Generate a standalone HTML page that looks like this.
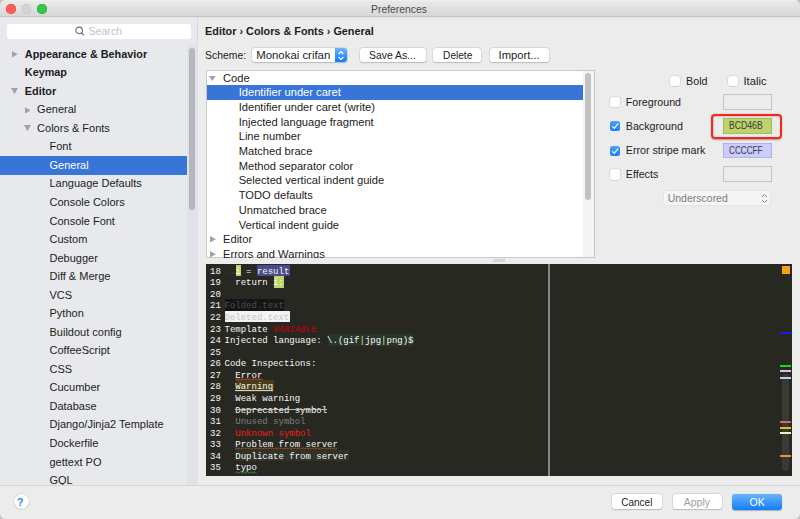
<!DOCTYPE html>
<html><head><meta charset="utf-8"><title>Preferences</title>
<style>
*{margin:0;padding:0;box-sizing:border-box}
html,body{width:800px;height:519px;overflow:hidden;background:#ececec;font-family:'Liberation Sans', sans-serif}
.t{position:absolute;white-space:pre;line-height:20px}
.r{position:absolute;display:block}
</style></head><body>
<div class="r" style="left:0.00px;top:0.00px;width:800.00px;height:17.00px;background:linear-gradient(#f2f2f2 0px,#e9e9e9 1.5px,#d7d7d7 16px);border-bottom:1px solid #c4c4c4"></div>
<div class="r" style="left:0.00px;top:17.00px;width:800.00px;height:1.00px;background:#e2e2e2"></div>
<div class="t" style="left:371.00px;top:0px;font-size:10.4px;font-weight:normal;color:#4a4a4a;font-family:'Liberation Sans';">Preferences</div>
<div class="r" style="left:6.25px;top:3.90px;width:9.70px;height:9.70px;background:#fc605c;border-radius:50%;box-shadow:inset 0 0 0 0.5px #e0443e"></div>
<div class="r" style="left:21.55px;top:3.90px;width:9.70px;height:9.70px;background:#d3d3d3;border-radius:50%;box-shadow:inset 0 0 0 0.5px #c2c2c2"></div>
<div class="r" style="left:37.15px;top:3.90px;width:9.70px;height:9.70px;background:#34c84a;border-radius:50%;box-shadow:inset 0 0 0 0.5px #2ba23b"></div>
<div class="r" style="left:0.00px;top:17.00px;width:198.00px;height:468.00px;background:#e7e9ed;border-right:1px solid #d8d8d8"></div>
<div class="r" style="left:7.00px;top:23.80px;width:183.50px;height:15.20px;background:#fff;border-radius:3px"></div>
<svg class="r" style="left:74px;top:25px" width="12" height="12"><circle cx="5.1" cy="5.4" r="3.3" fill="none" stroke="#6a6a6a" stroke-width="1.05"/><line x1="7.5" y1="7.9" x2="9.8" y2="10.4" stroke="#6a6a6a" stroke-width="1.2"/></svg>
<div class="t" style="left:88.50px;top:21px;font-size:10.6px;font-weight:normal;color:#c2c2c2;font-family:'Liberation Sans';">Search</div>
<div class="r" style="left:186.50px;top:45.00px;width:11.00px;height:440.00px;background:#dfe2e6"></div>
<div class="r" style="left:188.50px;top:47.50px;width:6.00px;height:162.50px;background:#b5b7ba;border-radius:3px"></div>
<svg class="r" style="left:12.200000000000001px;top:51.05px" width="5.6" height="6.6"><polygon points="0,0 5.6,3.3 0,6.6" fill="#a3a3a3"/></svg>
<div class="t" style="left:24.80px;top:44px;font-size:10.85px;font-weight:bold;color:#1c1c1c;font-family:'Liberation Sans';">Appearance &amp; Behavior</div>
<div class="t" style="left:24.80px;top:62px;font-size:10.85px;font-weight:bold;color:#1c1c1c;font-family:'Liberation Sans';">Keymap</div>
<svg class="r" style="left:11.3px;top:87.92999999999999px" width="7" height="6.2"><polygon points="0,0 7,0 3.5,6.2" fill="#a3a3a3"/></svg>
<div class="t" style="left:24.80px;top:81px;font-size:10.85px;font-weight:bold;color:#1c1c1c;font-family:'Liberation Sans';">Editor</div>
<svg class="r" style="left:24.5px;top:106.67px" width="5.6" height="6.6"><polygon points="0,0 5.6,3.3 0,6.6" fill="#a3a3a3"/></svg>
<div class="t" style="left:37.10px;top:99px;font-size:11px;font-weight:normal;color:#1c1c1c;font-family:'Liberation Sans';">General</div>
<svg class="r" style="left:23.6px;top:125.01px" width="7" height="6.2"><polygon points="0,0 7,0 3.5,6.2" fill="#a3a3a3"/></svg>
<div class="t" style="left:37.10px;top:118px;font-size:11px;font-weight:normal;color:#1c1c1c;font-family:'Liberation Sans';">Colors &amp; Fonts</div>
<div class="t" style="left:49.50px;top:136px;font-size:11px;font-weight:normal;color:#1c1c1c;font-family:'Liberation Sans';">Font</div>
<div class="r" style="left:0.00px;top:156.00px;width:186.50px;height:18.50px;background:#3875d7"></div>
<div class="t" style="left:49.50px;top:155px;font-size:11px;font-weight:normal;color:#fff;font-family:'Liberation Sans';">General</div>
<div class="t" style="left:49.50px;top:173px;font-size:11px;font-weight:normal;color:#1c1c1c;font-family:'Liberation Sans';">Language Defaults</div>
<div class="t" style="left:49.50px;top:192px;font-size:11px;font-weight:normal;color:#1c1c1c;font-family:'Liberation Sans';">Console Colors</div>
<div class="t" style="left:49.50px;top:211px;font-size:11px;font-weight:normal;color:#1c1c1c;font-family:'Liberation Sans';">Console Font</div>
<div class="t" style="left:49.50px;top:229px;font-size:11px;font-weight:normal;color:#1c1c1c;font-family:'Liberation Sans';">Custom</div>
<div class="t" style="left:49.50px;top:248px;font-size:11px;font-weight:normal;color:#1c1c1c;font-family:'Liberation Sans';">Debugger</div>
<div class="t" style="left:49.50px;top:266px;font-size:11px;font-weight:normal;color:#1c1c1c;font-family:'Liberation Sans';">Diff &amp; Merge</div>
<div class="t" style="left:49.50px;top:285px;font-size:11px;font-weight:normal;color:#1c1c1c;font-family:'Liberation Sans';">VCS</div>
<div class="t" style="left:49.50px;top:303px;font-size:11px;font-weight:normal;color:#1c1c1c;font-family:'Liberation Sans';">Python</div>
<div class="t" style="left:49.50px;top:322px;font-size:11px;font-weight:normal;color:#1c1c1c;font-family:'Liberation Sans';">Buildout config</div>
<div class="t" style="left:49.50px;top:340px;font-size:11px;font-weight:normal;color:#1c1c1c;font-family:'Liberation Sans';">CoffeeScript</div>
<div class="t" style="left:49.50px;top:359px;font-size:11px;font-weight:normal;color:#1c1c1c;font-family:'Liberation Sans';">CSS</div>
<div class="t" style="left:49.50px;top:377px;font-size:11px;font-weight:normal;color:#1c1c1c;font-family:'Liberation Sans';">Cucumber</div>
<div class="t" style="left:49.50px;top:396px;font-size:11px;font-weight:normal;color:#1c1c1c;font-family:'Liberation Sans';">Database</div>
<div class="t" style="left:49.50px;top:414px;font-size:11px;font-weight:normal;color:#1c1c1c;font-family:'Liberation Sans';">Django/Jinja2 Template</div>
<div class="t" style="left:49.50px;top:433px;font-size:11px;font-weight:normal;color:#1c1c1c;font-family:'Liberation Sans';">Dockerfile</div>
<div class="t" style="left:49.50px;top:452px;font-size:11px;font-weight:normal;color:#1c1c1c;font-family:'Liberation Sans';">gettext PO</div>
<div class="t" style="left:49.50px;top:470px;font-size:11px;font-weight:normal;color:#1c1c1c;font-family:'Liberation Sans';">GQL</div>
<div class="t" style="left:205.10px;top:21px;font-size:10.85px;font-weight:bold;color:#1c1c1c;font-family:'Liberation Sans';">Editor › Colors &amp; Fonts › General</div>
<div class="t" style="left:205.10px;top:46px;font-size:10.4px;font-weight:normal;color:#1c1c1c;font-family:'Liberation Sans';">Scheme:</div>
<div class="r" style="left:252.20px;top:47.50px;width:94.50px;height:14.80px;background:#fff;border-radius:3px;box-shadow:0 0 0 0.5px #c8c8c8,0 0.5px 1px rgba(0,0,0,.25)"></div>
<div class="r" style="left:334.60px;top:47.50px;width:12.10px;height:14.80px;background:linear-gradient(#6cb3fa,#0d7ef9);border-radius:0 3px 3px 0"></div>
<svg class="r" style="left:336.6px;top:49.5px" width="8" height="11"><polyline points="1.6,4 4,1.6 6.4,4" fill="none" stroke="#fff" stroke-width="1.1"/><polyline points="1.6,7 4,9.4 6.4,7" fill="none" stroke="#fff" stroke-width="1.1"/></svg>
<div class="t" style="left:256.20px;top:45px;font-size:11.4px;font-weight:normal;color:#1c1c1c;font-family:'Liberation Sans';">Monokai crifan</div>
<div class="r" style="left:359.60px;top:48.10px;width:66.00px;height:14.40px;background:#fff;border-radius:3px;box-shadow:0 0 0 0.5px #c8c8c8,0 0.5px 1px rgba(0,0,0,.25)"></div>
<div class="t" style="left:369.00px;top:46px;font-size:10.4px;font-weight:normal;color:#1c1c1c;font-family:'Liberation Sans';">Save As...</div>
<div class="r" style="left:433.40px;top:48.10px;width:48.00px;height:14.40px;background:#fff;border-radius:3px;box-shadow:0 0 0 0.5px #c8c8c8,0 0.5px 1px rgba(0,0,0,.25)"></div>
<div class="t" style="left:443.10px;top:46px;font-size:10.1px;font-weight:normal;color:#1c1c1c;font-family:'Liberation Sans';">Delete</div>
<div class="r" style="left:489.50px;top:48.10px;width:59.10px;height:14.40px;background:#fff;border-radius:3px;box-shadow:0 0 0 0.5px #c8c8c8,0 0.5px 1px rgba(0,0,0,.25)"></div>
<div class="t" style="left:498.60px;top:45px;font-size:11.2px;font-weight:normal;color:#1c1c1c;font-family:'Liberation Sans';">Import...</div>
<div class="r" style="left:205.60px;top:70.30px;width:389.00px;height:187.50px;background:#fff;border:1px solid #c9c9c9"></div>
<div class="r" style="left:583.00px;top:71.30px;width:11.00px;height:185.50px;background:#f4f4f4"></div>
<div class="r" style="left:585.10px;top:73.00px;width:6.00px;height:127.00px;background:#c2c2c2;border-radius:3px"></div>
<div class="r" style="left:206px;top:71px;width:377px;height:186.5px;overflow:hidden">
<svg class="r" style="left:3.0999999999999996px;top:4.600000000000003px" width="6.6" height="5.2"><polygon points="0,0 6.6,0 3.3,5.2" fill="#a3a3a3"/></svg>
<div class="t" style="left:17.00px;top:-3px;font-size:11.15px;font-weight:normal;color:#1c1c1c;font-family:'Liberation Sans';">Code</div>
<div class="r" style="left:0.60px;top:14.30px;width:376.40px;height:14.50px;background:#3875d7"></div>
<div class="t" style="left:32.70px;top:11px;font-size:11.15px;font-weight:normal;color:#fff;font-family:'Liberation Sans';">Identifier under caret</div>
<div class="t" style="left:32.70px;top:26px;font-size:11.15px;font-weight:normal;color:#1c1c1c;font-family:'Liberation Sans';">Identifier under caret (write)</div>
<div class="t" style="left:32.70px;top:41px;font-size:11.15px;font-weight:normal;color:#1c1c1c;font-family:'Liberation Sans';">Injected language fragment</div>
<div class="t" style="left:32.70px;top:55px;font-size:11.15px;font-weight:normal;color:#1c1c1c;font-family:'Liberation Sans';">Line number</div>
<div class="t" style="left:32.70px;top:70px;font-size:11.15px;font-weight:normal;color:#1c1c1c;font-family:'Liberation Sans';">Matched brace</div>
<div class="t" style="left:32.70px;top:85px;font-size:11.15px;font-weight:normal;color:#1c1c1c;font-family:'Liberation Sans';">Method separator color</div>
<div class="t" style="left:32.70px;top:99px;font-size:11.15px;font-weight:normal;color:#1c1c1c;font-family:'Liberation Sans';">Selected vertical indent guide</div>
<div class="t" style="left:32.70px;top:114px;font-size:11.15px;font-weight:normal;color:#1c1c1c;font-family:'Liberation Sans';">TODO defaults</div>
<div class="t" style="left:32.70px;top:129px;font-size:11.15px;font-weight:normal;color:#1c1c1c;font-family:'Liberation Sans';">Unmatched brace</div>
<div class="t" style="left:32.70px;top:144px;font-size:11.15px;font-weight:normal;color:#1c1c1c;font-family:'Liberation Sans';">Vertical indent guide</div>
<svg class="r" style="left:3.5px;top:165.38px" width="6" height="6.5"><polygon points="0,0 6,3.25 0,6.5" fill="#a3a3a3"/></svg>
<div class="t" style="left:17.00px;top:158px;font-size:11.15px;font-weight:normal;color:#1c1c1c;font-family:'Liberation Sans';">Editor</div>
<svg class="r" style="left:3.5px;top:180.06px" width="6" height="6.5"><polygon points="0,0 6,3.25 0,6.5" fill="#a3a3a3"/></svg>
<div class="t" style="left:17.00px;top:173px;font-size:11.15px;font-weight:normal;color:#1c1c1c;font-family:'Liberation Sans';">Errors and Warnings</div>
</div>
<svg class="r" style="left:493px;top:258.5px" width="12" height="3"><g stroke="#b0b0b0" stroke-width="0.8"><line x1="0.5" y1="3" x2="2" y2="0"/><line x1="2.5" y1="3" x2="4" y2="0"/><line x1="4.5" y1="3" x2="6" y2="0"/><line x1="6.5" y1="3" x2="8" y2="0"/><line x1="8.5" y1="3" x2="10" y2="0"/><line x1="10.5" y1="3" x2="12" y2="0"/></g></svg>
<div class="r" style="left:670.30px;top:76.20px;width:10.20px;height:10.20px;background:#fff;border-radius:2.5px;box-shadow:0 0 0 0.5px #c8c8c8,0 0.5px 0.5px rgba(0,0,0,.12)"></div>
<div class="t" style="left:686.10px;top:71px;font-size:10.7px;font-weight:normal;color:#1c1c1c;font-family:'Liberation Sans';">Bold</div>
<div class="r" style="left:728.20px;top:76.20px;width:10.20px;height:10.20px;background:#fff;border-radius:2.5px;box-shadow:0 0 0 0.5px #c8c8c8,0 0.5px 0.5px rgba(0,0,0,.12)"></div>
<div class="t" style="left:743.50px;top:71px;font-size:11.2px;font-weight:normal;color:#1c1c1c;font-family:'Liberation Sans';">Italic</div>
<div class="r" style="left:610.10px;top:97.00px;width:10.20px;height:10.20px;background:#fff;border-radius:2.5px;box-shadow:0 0 0 0.5px #c8c8c8,0 0.5px 0.5px rgba(0,0,0,.12)"></div>
<div class="t" style="left:625.80px;top:92px;font-size:10.7px;font-weight:normal;color:#1c1c1c;font-family:'Liberation Sans';">Foreground</div>
<div class="r" style="left:723.00px;top:94.30px;width:48.50px;height:15.30px;background:#ececec;border:1px solid #c4c4c4"></div>
<div class="r" style="left:610.10px;top:121.20px;width:10.20px;height:10.20px;background:linear-gradient(#4ca2f9,#1a7ff4);border-radius:2.5px"></div>
<svg class="r" style="left:610.1px;top:121.2px" width="10.2" height="10.2"><polyline points="2.4,5.3 4.3,7.4 8,2.7" fill="none" stroke="#fff" stroke-width="1.2"/></svg>
<div class="t" style="left:625.80px;top:116px;font-size:10.7px;font-weight:normal;color:#1c1c1c;font-family:'Liberation Sans';">Background</div>
<div class="r" style="left:723.00px;top:118.30px;width:48.50px;height:15.60px;background:#bcd46b;box-shadow:inset 0 0 0 0.6px rgba(0,0,0,.22)"></div>
<div class="t" style="left:728.50px;top:116px;font-size:10.2px;font-weight:normal;color:#3a3a3a;font-family:'Liberation Sans';transform:scaleX(0.85);transform-origin:0 0">BCD46B</div>
<div class="r" style="left:610.10px;top:145.60px;width:10.20px;height:10.20px;background:linear-gradient(#4ca2f9,#1a7ff4);border-radius:2.5px"></div>
<svg class="r" style="left:610.1px;top:145.6px" width="10.2" height="10.2"><polyline points="2.4,5.3 4.3,7.4 8,2.7" fill="none" stroke="#fff" stroke-width="1.2"/></svg>
<div class="t" style="left:625.80px;top:140px;font-size:10.7px;font-weight:normal;color:#1c1c1c;font-family:'Liberation Sans';">Error stripe mark</div>
<div class="r" style="left:723.00px;top:142.80px;width:48.50px;height:15.60px;background:#ccccff;box-shadow:inset 0 0 0 0.6px rgba(0,0,0,.22)"></div>
<div class="t" style="left:728.50px;top:141px;font-size:10.2px;font-weight:normal;color:#3a3a3a;font-family:'Liberation Sans';transform:scaleX(0.8);transform-origin:0 0">CCCCFF</div>
<div class="r" style="left:610.10px;top:169.40px;width:10.20px;height:10.20px;background:#fff;border-radius:2.5px;box-shadow:0 0 0 0.5px #c8c8c8,0 0.5px 0.5px rgba(0,0,0,.12)"></div>
<div class="t" style="left:625.80px;top:164px;font-size:10.7px;font-weight:normal;color:#1c1c1c;font-family:'Liberation Sans';">Effects</div>
<div class="r" style="left:723.00px;top:166.30px;width:48.50px;height:15.30px;background:#ececec;border:1px solid #c4c4c4"></div>
<div class="r" style="left:711.00px;top:113.90px;width:70.60px;height:25.40px;border:2.2px solid #f5261a;border-radius:4px;box-shadow:0 0.5px 1.5px rgba(0,0,0,.35),inset 0.5px 0.5px 1.5px rgba(0,0,0,.25)"></div>
<div class="r" style="left:663.70px;top:191.20px;width:106.00px;height:13.80px;background:#f5f5f5;border-radius:3px;box-shadow:0 0 0 0.5px #dcdcdc"></div>
<div class="t" style="left:667.70px;top:188px;font-size:10.5px;font-weight:normal;color:#7c7c7c;font-family:'Liberation Sans';">Underscored</div>
<svg class="r" style="left:760.5px;top:192.5px" width="7" height="11"><polyline points="1,4 3.5,1.5 6,4" fill="none" stroke="#8a8a8a" stroke-width="1"/><polyline points="1,7 3.5,9.5 6,7" fill="none" stroke="#8a8a8a" stroke-width="1"/></svg>
<div class="r" style="left:206.00px;top:264.00px;width:585.50px;height:211.50px;background:#272822;overflow:hidden"></div>
<div class="r" style="left:548.20px;top:264.00px;width:2.00px;height:211.50px;background:#858582"></div>
<div class="t" style="left:210.10px;top:262px;font-size:9px;font-weight:normal;color:#f8f8f2;font-family:'Liberation Mono';">18</div>
<div class="t" style="left:210.10px;top:273px;font-size:9px;font-weight:normal;color:#f8f8f2;font-family:'Liberation Mono';">19</div>
<div class="t" style="left:210.10px;top:285px;font-size:9px;font-weight:normal;color:#f8f8f2;font-family:'Liberation Mono';">20</div>
<div class="t" style="left:210.10px;top:296px;font-size:9px;font-weight:normal;color:#f8f8f2;font-family:'Liberation Mono';">21</div>
<div class="t" style="left:210.10px;top:308px;font-size:9px;font-weight:normal;color:#f8f8f2;font-family:'Liberation Mono';">22</div>
<div class="t" style="left:210.10px;top:320px;font-size:9px;font-weight:normal;color:#f8f8f2;font-family:'Liberation Mono';">23</div>
<div class="t" style="left:210.10px;top:331px;font-size:9px;font-weight:normal;color:#f8f8f2;font-family:'Liberation Mono';">24</div>
<div class="t" style="left:210.10px;top:343px;font-size:9px;font-weight:normal;color:#f8f8f2;font-family:'Liberation Mono';">25</div>
<div class="t" style="left:210.10px;top:354px;font-size:9px;font-weight:normal;color:#f8f8f2;font-family:'Liberation Mono';">26</div>
<div class="t" style="left:210.10px;top:366px;font-size:9px;font-weight:normal;color:#f8f8f2;font-family:'Liberation Mono';">27</div>
<div class="t" style="left:210.10px;top:377px;font-size:9px;font-weight:normal;color:#f8f8f2;font-family:'Liberation Mono';">28</div>
<div class="t" style="left:210.10px;top:389px;font-size:9px;font-weight:normal;color:#f8f8f2;font-family:'Liberation Mono';">29</div>
<div class="t" style="left:210.10px;top:401px;font-size:9px;font-weight:normal;color:#f8f8f2;font-family:'Liberation Mono';">30</div>
<div class="t" style="left:210.10px;top:412px;font-size:9px;font-weight:normal;color:#f8f8f2;font-family:'Liberation Mono';">31</div>
<div class="t" style="left:210.10px;top:424px;font-size:9px;font-weight:normal;color:#f8f8f2;font-family:'Liberation Mono';">32</div>
<div class="t" style="left:210.10px;top:435px;font-size:9px;font-weight:normal;color:#f8f8f2;font-family:'Liberation Mono';">33</div>
<div class="t" style="left:210.10px;top:447px;font-size:9px;font-weight:normal;color:#f8f8f2;font-family:'Liberation Mono';">34</div>
<div class="t" style="left:210.10px;top:458px;font-size:9px;font-weight:normal;color:#f8f8f2;font-family:'Liberation Mono';">35</div>
<div class="r" style="left:235.80px;top:264.70px;width:5.40px;height:11.40px;background:#bcd46b"></div>
<div class="r" style="left:257.40px;top:264.70px;width:32.40px;height:11.40px;background:#4a4b8a"></div>
<div class="t" style="left:235.30px;top:262px;font-size:9px;font-weight:normal;color:#f8f8f2;font-family:'Liberation Mono';">i</div>
<div class="t" style="left:246.10px;top:262px;font-size:9px;font-weight:normal;color:#f8f8f2;font-family:'Liberation Mono';">=</div>
<div class="t" style="left:256.90px;top:262px;font-size:9px;font-weight:normal;color:#f8f8f2;font-family:'Liberation Mono';">result</div>
<div class="t" style="left:229.36px;top:262px;font-size:9px;font-weight:normal;color:#3a3b34;font-family:'Liberation Mono';">.</div>
<div class="t" style="left:235.30px;top:273px;font-size:9px;font-weight:normal;color:#f8f8f2;font-family:'Liberation Mono';">return</div>
<div class="r" style="left:273.60px;top:276.27px;width:10.80px;height:11.40px;background:#bcd46b"></div>
<div class="t" style="left:273.10px;top:273px;font-size:9px;font-weight:normal;color:#f8f8f2;font-family:'Liberation Mono';">i;</div>
<div class="r" style="left:225.00px;top:299.41px;width:59.40px;height:11.40px;background:#151515"></div>
<div class="t" style="left:224.50px;top:296px;font-size:9px;font-weight:normal;color:#4e4e4e;font-family:'Liberation Mono';">Folded.text</div>
<div class="r" style="left:225.00px;top:310.98px;width:64.80px;height:11.40px;background:#f3f3f3"></div>
<div class="t" style="left:224.50px;top:308px;font-size:9px;font-weight:normal;color:#c6c6c6;font-family:'Liberation Mono';">Deleted.text</div>
<div class="t" style="left:224.50px;top:320px;font-size:9px;font-weight:normal;color:#f8f8f2;font-family:'Liberation Mono';">Template</div>
<div class="t" style="left:273.10px;top:320px;font-size:9px;font-weight:bold;color:#9a0a0a;font-family:'Liberation Mono';font-weight:bold;font-style:italic">VARIABLE</div>
<div class="t" style="left:224.50px;top:331px;font-size:9px;font-weight:normal;color:#f8f8f2;font-family:'Liberation Mono';">Injected language:</div>
<div class="r" style="left:327.60px;top:334.12px;width:86.40px;height:11.40px;background:#27362a"></div>
<div class="t" style="left:327.10px;top:331px;font-size:9px;font-weight:normal;color:#f8f8f2;font-family:'Liberation Mono';">\.(gif<span style="color:#e6d2b0">|</span>jpg<span style="color:#e6d2b0">|</span>png)$</div>
<div class="t" style="left:224.50px;top:354px;font-size:9px;font-weight:normal;color:#f8f8f2;font-family:'Liberation Mono';">Code Inspections:</div>
<div class="t" style="left:235.30px;top:366px;font-size:9px;font-weight:normal;color:#f8f8f2;font-family:'Liberation Mono';">Error</div>
<svg class="r" style="left:235px;top:377.5px" width="30.5" height="3"><polyline points="0.00,2.30 1.40,0.70 2.80,2.30 4.20,0.70 5.60,2.30 7.00,0.70 8.40,2.30 9.80,0.70 11.20,2.30 12.60,0.70 14.00,2.30 15.40,0.70 16.80,2.30 18.20,0.70 19.60,2.30 21.00,0.70 22.40,2.30 23.80,0.70 25.20,2.30 26.60,0.70 28.00,2.30" fill="none" stroke="#d84a4a" stroke-width="0.9"/></svg>
<div class="r" style="left:235.80px;top:380.10px;width:37.80px;height:11.60px;background:#473e19"></div>
<div class="t" style="left:235.30px;top:377px;font-size:9px;font-weight:normal;color:#f8f8f2;font-family:'Liberation Mono';">Warning</div>
<div class="r" style="left:235.00px;top:389.60px;width:38.00px;height:1.00px;background:#ddd6b0"></div>
<div class="t" style="left:235.30px;top:389px;font-size:9px;font-weight:normal;color:#f8f8f2;font-family:'Liberation Mono';">Weak warning</div>
<div class="t" style="left:235.30px;top:401px;font-size:9px;font-weight:normal;color:#f8f8f2;font-family:'Liberation Mono';">Deprecated symbol</div>
<div class="r" style="left:235.00px;top:409.30px;width:92.00px;height:1.00px;background:#bdbdb5"></div>
<div class="t" style="left:235.30px;top:412px;font-size:9px;font-weight:normal;color:#7f7f7a;font-family:'Liberation Mono';">Unused symbol</div>
<div class="t" style="left:235.30px;top:424px;font-size:9px;font-weight:normal;color:#f41a1a;font-family:'Liberation Mono';">Unknown symbol</div>
<div class="r" style="left:235.80px;top:449.92px;width:113.40px;height:10.60px;background:#32322c"></div>
<div class="t" style="left:235.30px;top:435px;font-size:9px;font-weight:normal;color:#f8f8f2;font-family:'Liberation Mono';">Problem from server</div>
<svg class="r" style="left:235px;top:446.9px" width="105" height="3"><polyline points="0.00,2.30 1.40,0.70 2.80,2.30 4.20,0.70 5.60,2.30 7.00,0.70 8.40,2.30 9.80,0.70 11.20,2.30 12.60,0.70 14.00,2.30 15.40,0.70 16.80,2.30 18.20,0.70 19.60,2.30 21.00,0.70 22.40,2.30 23.80,0.70 25.20,2.30 26.60,0.70 28.00,2.30 29.40,0.70 30.80,2.30 32.20,0.70 33.60,2.30 35.00,0.70 36.40,2.30 37.80,0.70 39.20,2.30 40.60,0.70 42.00,2.30 43.40,0.70 44.80,2.30 46.20,0.70 47.60,2.30 49.00,0.70 50.40,2.30 51.80,0.70 53.20,2.30 54.60,0.70 56.00,2.30 57.40,0.70 58.80,2.30 60.20,0.70 61.60,2.30 63.00,0.70 64.40,2.30 65.80,0.70 67.20,2.30 68.60,0.70 70.00,2.30 71.40,0.70 72.80,2.30 74.20,0.70 75.60,2.30 77.00,0.70 78.40,2.30 79.80,0.70 81.20,2.30 82.60,0.70 84.00,2.30 85.40,0.70 86.80,2.30 88.20,0.70 89.60,2.30 91.00,0.70 92.40,2.30 93.80,0.70 95.20,2.30 96.60,0.70 98.00,2.30 99.40,0.70 100.80,2.30 102.20,0.70" fill="none" stroke="#a5561a" stroke-width="0.9"/></svg>
<div class="t" style="left:235.30px;top:447px;font-size:9px;font-weight:normal;color:#f8f8f2;font-family:'Liberation Mono';">Duplicate from server</div>
<div class="t" style="left:235.30px;top:458px;font-size:9px;font-weight:normal;color:#f8f8f2;font-family:'Liberation Mono';">typo</div>
<svg class="r" style="left:235px;top:470.5px" width="24.5" height="3"><polyline points="0.00,2.30 1.80,0.70 3.60,2.30 5.40,0.70 7.20,2.30 9.00,0.70 10.80,2.30 12.60,0.70 14.40,2.30 16.20,0.70 18.00,2.30 19.80,0.70 21.60,2.30" fill="none" stroke="#4e8e4e" stroke-width="0.9"/></svg>
<div class="r" style="left:227.20px;top:272.40px;width:1.00px;height:1.00px;background:#3b3c35"></div>
<div class="r" style="left:232.60px;top:272.40px;width:1.00px;height:1.00px;background:#3b3c35"></div>
<div class="r" style="left:243.40px;top:272.40px;width:1.00px;height:1.00px;background:#3b3c35"></div>
<div class="r" style="left:254.20px;top:272.40px;width:1.00px;height:1.00px;background:#3b3c35"></div>
<div class="r" style="left:227.20px;top:283.97px;width:1.00px;height:1.00px;background:#3b3c35"></div>
<div class="r" style="left:232.60px;top:283.97px;width:1.00px;height:1.00px;background:#3b3c35"></div>
<div class="r" style="left:270.40px;top:283.97px;width:1.00px;height:1.00px;background:#3b3c35"></div>
<div class="r" style="left:227.20px;top:376.53px;width:1.00px;height:1.00px;background:#3b3c35"></div>
<div class="r" style="left:232.60px;top:376.53px;width:1.00px;height:1.00px;background:#3b3c35"></div>
<div class="r" style="left:227.20px;top:388.10px;width:1.00px;height:1.00px;background:#3b3c35"></div>
<div class="r" style="left:232.60px;top:388.10px;width:1.00px;height:1.00px;background:#3b3c35"></div>
<div class="r" style="left:227.20px;top:399.67px;width:1.00px;height:1.00px;background:#3b3c35"></div>
<div class="r" style="left:232.60px;top:399.67px;width:1.00px;height:1.00px;background:#3b3c35"></div>
<div class="r" style="left:259.60px;top:399.67px;width:1.00px;height:1.00px;background:#3b3c35"></div>
<div class="r" style="left:227.20px;top:411.24px;width:1.00px;height:1.00px;background:#3b3c35"></div>
<div class="r" style="left:232.60px;top:411.24px;width:1.00px;height:1.00px;background:#3b3c35"></div>
<div class="r" style="left:292.00px;top:411.24px;width:1.00px;height:1.00px;background:#3b3c35"></div>
<div class="r" style="left:227.20px;top:422.81px;width:1.00px;height:1.00px;background:#3b3c35"></div>
<div class="r" style="left:232.60px;top:422.81px;width:1.00px;height:1.00px;background:#3b3c35"></div>
<div class="r" style="left:270.40px;top:422.81px;width:1.00px;height:1.00px;background:#3b3c35"></div>
<div class="r" style="left:227.20px;top:434.38px;width:1.00px;height:1.00px;background:#3b3c35"></div>
<div class="r" style="left:232.60px;top:434.38px;width:1.00px;height:1.00px;background:#3b3c35"></div>
<div class="r" style="left:275.80px;top:434.38px;width:1.00px;height:1.00px;background:#3b3c35"></div>
<div class="r" style="left:227.20px;top:445.95px;width:1.00px;height:1.00px;background:#3b3c35"></div>
<div class="r" style="left:232.60px;top:445.95px;width:1.00px;height:1.00px;background:#3b3c35"></div>
<div class="r" style="left:275.80px;top:445.95px;width:1.00px;height:1.00px;background:#3b3c35"></div>
<div class="r" style="left:302.80px;top:445.95px;width:1.00px;height:1.00px;background:#3b3c35"></div>
<div class="r" style="left:227.20px;top:457.52px;width:1.00px;height:1.00px;background:#3b3c35"></div>
<div class="r" style="left:232.60px;top:457.52px;width:1.00px;height:1.00px;background:#3b3c35"></div>
<div class="r" style="left:286.60px;top:457.52px;width:1.00px;height:1.00px;background:#3b3c35"></div>
<div class="r" style="left:313.60px;top:457.52px;width:1.00px;height:1.00px;background:#3b3c35"></div>
<div class="r" style="left:227.20px;top:469.09px;width:1.00px;height:1.00px;background:#3b3c35"></div>
<div class="r" style="left:232.60px;top:469.09px;width:1.00px;height:1.00px;background:#3b3c35"></div>
<div class="r" style="left:782.00px;top:266.00px;width:8.00px;height:8.00px;background:#f2a01c"></div>
<div class="r" style="left:782.20px;top:373.50px;width:7.20px;height:97.30px;background:#393a34;border-radius:3.6px"></div>
<div class="r" style="left:780.00px;top:331.50px;width:11.00px;height:2.00px;background:#1818ff"></div>
<div class="r" style="left:780.00px;top:364.70px;width:11.00px;height:2.00px;background:#10e010"></div>
<div class="r" style="left:780.00px;top:370.10px;width:11.00px;height:2.00px;background:#eab8ea"></div>
<div class="r" style="left:780.00px;top:377.00px;width:11.00px;height:2.00px;background:#c8c8f4"></div>
<div class="r" style="left:780.00px;top:421.30px;width:11.00px;height:2.00px;background:#d06868"></div>
<div class="r" style="left:780.00px;top:426.80px;width:11.00px;height:2.00px;background:#e0c010"></div>
<div class="r" style="left:780.00px;top:432.00px;width:11.00px;height:2.00px;background:#f0f0c8"></div>
<div class="r" style="left:780.00px;top:454.70px;width:11.00px;height:2.00px;background:#f09030"></div>
<div class="r" style="left:0.00px;top:485.00px;width:800.00px;height:34.00px;background:#ececec;border-top:1px solid #d6d6d6"></div>
<div class="r" style="left:13.50px;top:494.30px;width:15.20px;height:15.20px;background:#fff;border-radius:50%;box-shadow:0 0 0 0.5px #c8c8c8,0 0.5px 1px rgba(0,0,0,.2)"></div>
<div class="t" style="left:17.10px;top:492px;font-size:10.5px;font-weight:bold;color:#2d7ff9;font-family:'Liberation Sans';">?</div>
<div class="r" style="left:612.00px;top:494.40px;width:49.50px;height:15.10px;background:#fff;border-radius:3px;box-shadow:0 0 0 0.5px #c8c8c8,0 0.5px 1px rgba(0,0,0,.25)"></div>
<div class="t" style="left:621.25px;top:493px;font-size:10px;font-weight:normal;color:#1c1c1c;font-family:'Liberation Sans';">Cancel</div>
<div class="r" style="left:672.50px;top:494.40px;width:49.50px;height:15.10px;background:#fff;border-radius:3px;box-shadow:0 0 0 0.5px #c8c8c8,0 0.5px 1px rgba(0,0,0,.25)"></div>
<div class="t" style="left:683.75px;top:492px;font-size:10.5px;font-weight:normal;color:#a0a0a0;font-family:'Liberation Sans';">Apply</div>
<div class="r" style="left:732.00px;top:494.20px;width:50.00px;height:15.60px;background:linear-gradient(#6cb3fa,#0f7ff9);border-radius:3px;box-shadow:0 0.5px 1px rgba(0,0,0,.25)"></div>
<div class="t" style="left:749.50px;top:492px;font-size:10.5px;font-weight:normal;color:#fff;font-family:'Liberation Sans';">OK</div>
<svg class="r" style="left:0px;top:0px;transform:rotate(0deg)" width="5" height="5"><path d="M0,0 L5,0 Q0.6,0.6 0,5 Z" fill="#b8b8b8" opacity="0.85"/></svg>
<svg class="r" style="left:795px;top:0px;transform:rotate(90deg)" width="5" height="5"><path d="M0,0 L5,0 Q0.6,0.6 0,5 Z" fill="#b8b8b8" opacity="0.85"/></svg>
<svg class="r" style="left:795px;top:514px;transform:rotate(180deg)" width="5" height="5"><path d="M0,0 L5,0 Q0.6,0.6 0,5 Z" fill="#b8b8b8" opacity="0.85"/></svg>
<svg class="r" style="left:0px;top:514px;transform:rotate(270deg)" width="5" height="5"><path d="M0,0 L5,0 Q0.6,0.6 0,5 Z" fill="#b8b8b8" opacity="0.85"/></svg>
</body></html>
